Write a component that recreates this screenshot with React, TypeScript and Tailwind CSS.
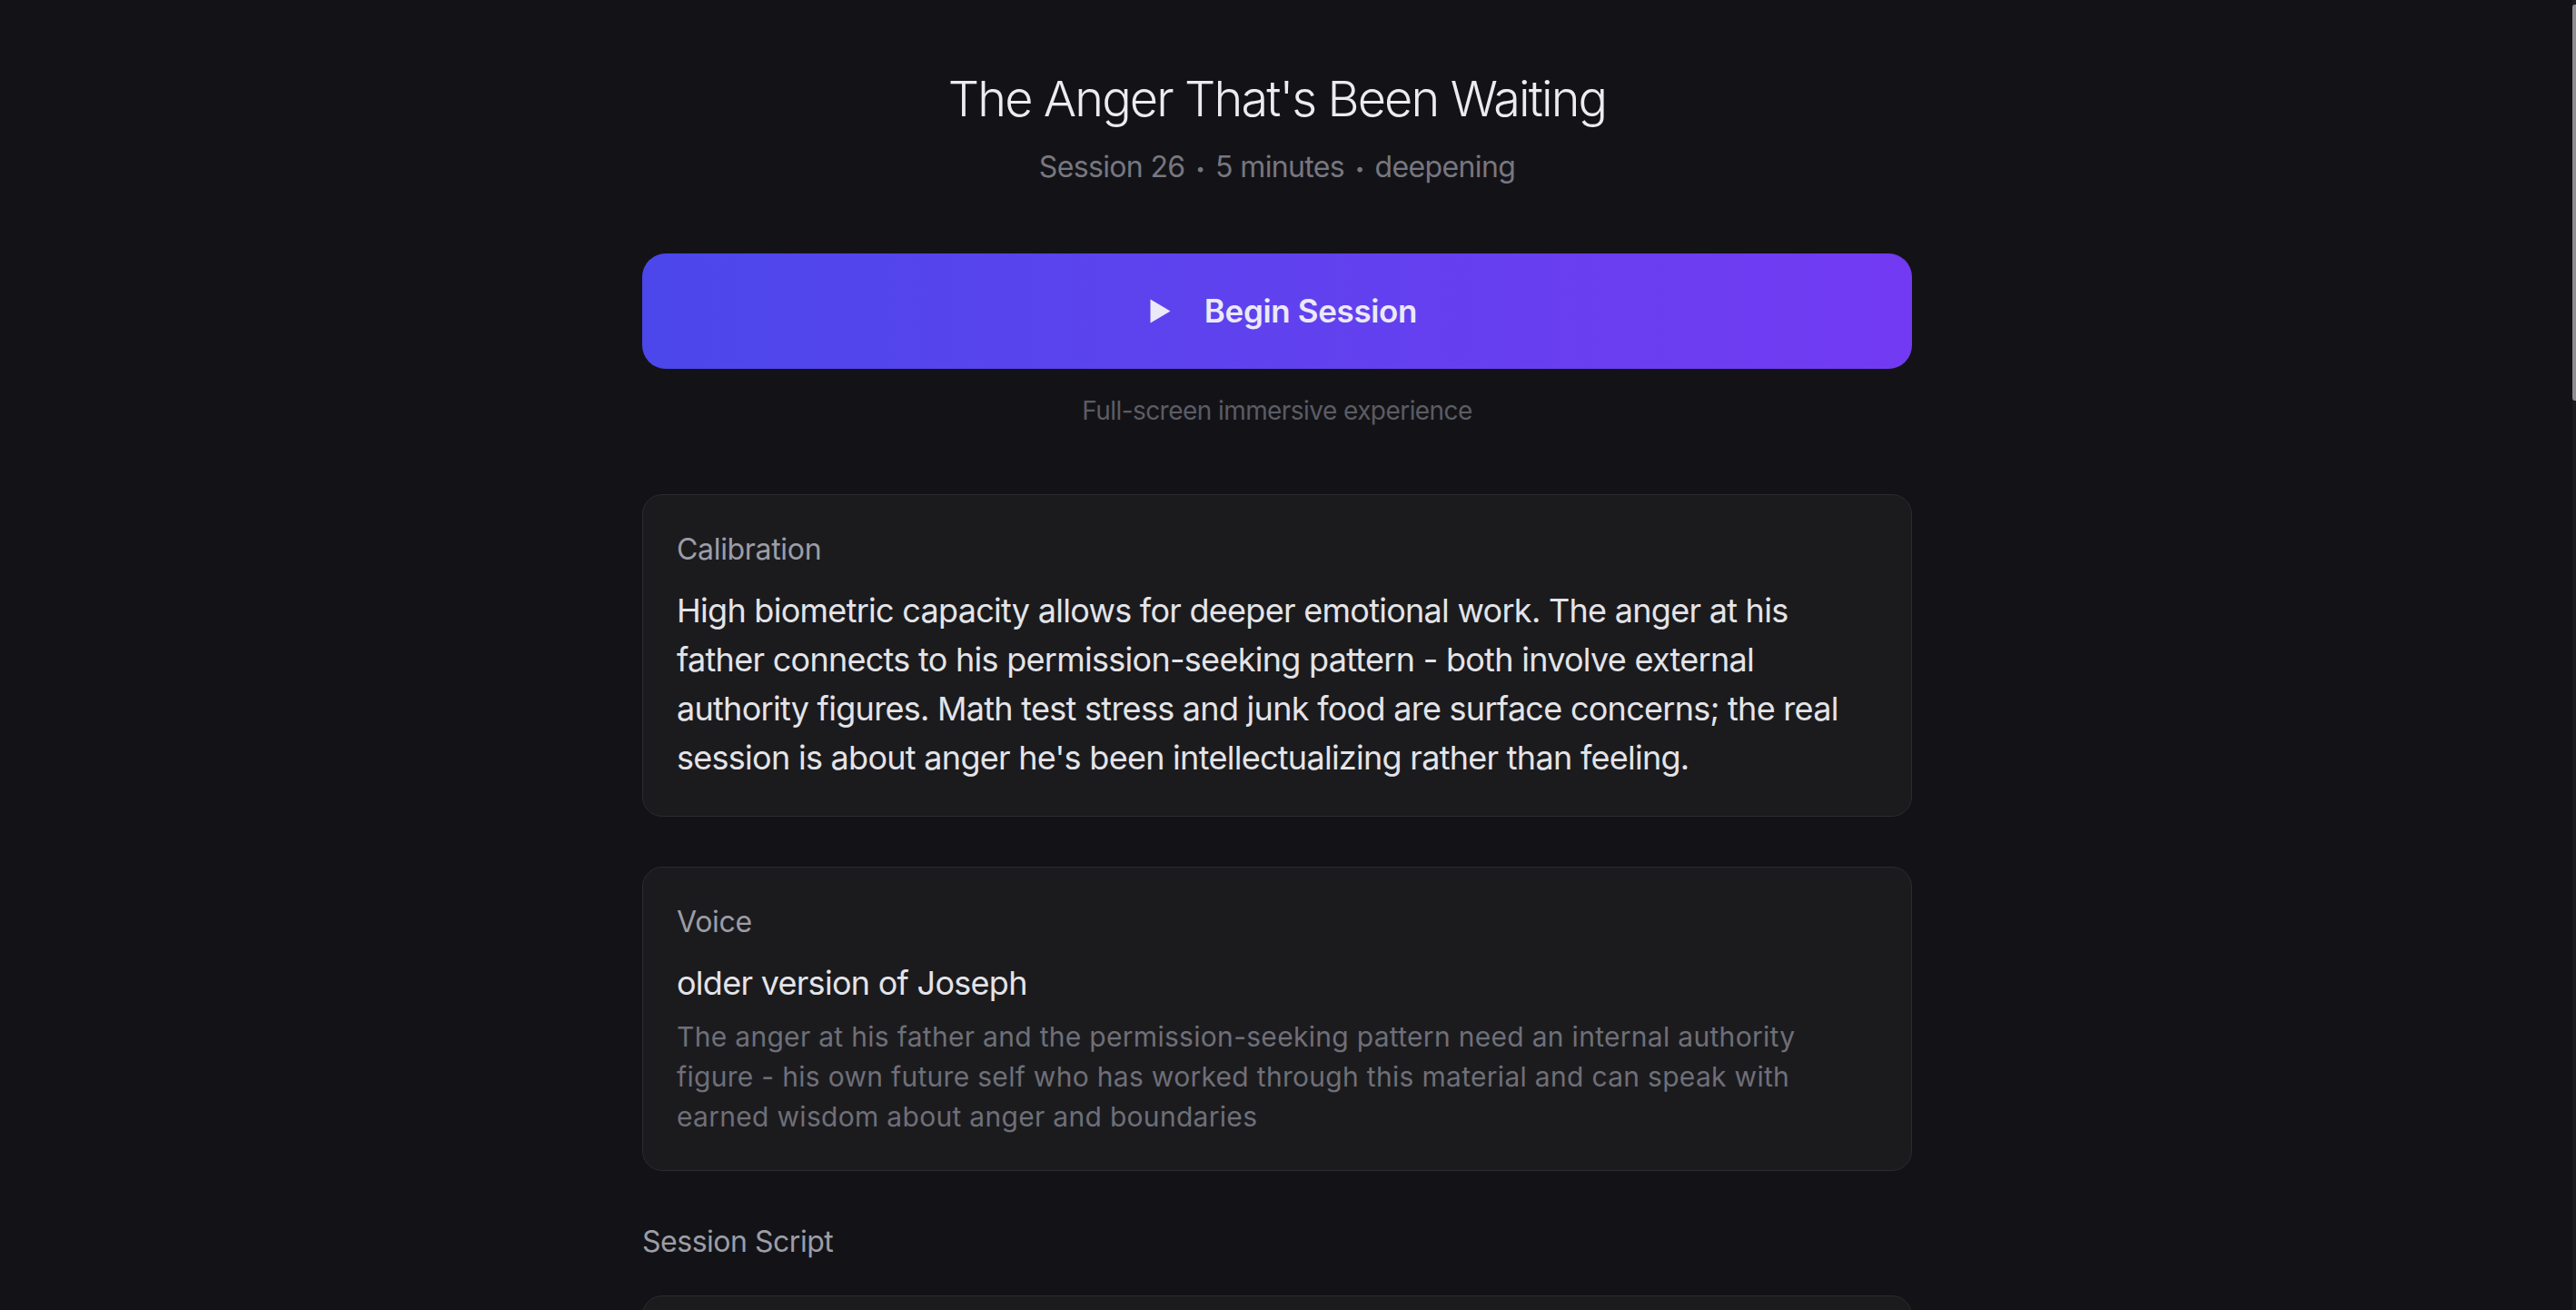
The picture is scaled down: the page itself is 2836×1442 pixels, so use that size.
import React from "react";

const font = { fontFamily: "Inter, 'Noto Sans', sans-serif" };

function PlayIcon() {
  return (
    <svg width="23" height="27" viewBox="0 0 23 27" className="flex-shrink-0">
      <path d="M0.5 0.5 L22.5 13.5 L0.5 26.5 Z" fill="currentColor" />
    </svg>
  );
}

function Card({ children }: { children: React.ReactNode }) {
  return (
    <div className="rounded-[22px] border border-[#2b2b30] bg-[#1b1b1e] px-[37px] pt-[36px] pb-[37px]">
      {children}
    </div>
  );
}

export default function App() {
  return (
    <div
      className="relative h-screen w-full overflow-hidden bg-[#131317] pr-[24px] antialiased"
      style={font}
    >
      <div className="mx-auto w-[1398px] pt-[77px]">
        <header className="text-center">
          <h1 className="text-[54px] font-light leading-[64px] tracking-[-0.035em] text-[#ececef]">
            The Anger That's Been Waiting
          </h1>
          <p className="mt-[19px] text-[32px] leading-[48px] tracking-[-0.02em] text-[#777780]">
            Session 26
            <span className="mx-[12px] align-[3px] text-[18px]">•</span>5 minutes
            <span className="mx-[12px] align-[3px] text-[18px]">•</span>deepening
          </p>
        </header>

        <button className="mt-[69px] flex h-[127px] w-full items-center justify-center gap-[37px] rounded-[26px] bg-linear-to-r from-[#4b47eb] to-[#723af2] pl-[14px] text-[#ebe9f7]">
          <PlayIcon />
          <span className="text-[35px] font-semibold tracking-[-0.01em]">Begin Session</span>
        </button>
        <p className="mt-[26px] text-center text-[28px] leading-[40px] tracking-[-0.02em] text-[#5c5c64]">
          Full-screen immersive experience
        </p>

        <div className="mt-[72px]">
          <Card>
            <div className="text-[32px] leading-[48px] tracking-[-0.01em] text-[#9d9da6]">
              Calibration
            </div>
            <p className="mt-[16px] text-[36px] leading-[54px] tracking-[-0.02em] text-[#e4e4e8]">
              High biometric capacity allows for deeper emotional work. The anger at his father
              connects to his permission-seeking pattern - both involve external authority figures.
              Math test stress and junk food are surface concerns; the real session is about anger
              he's been intellectualizing rather than feeling.
            </p>
          </Card>
        </div>

        <div className="mt-[55px]">
          <Card>
            <div className="text-[32px] leading-[48px] tracking-[-0.01em] text-[#9d9da6]">Voice</div>
            <div className="mt-[16px] text-[36px] leading-[54px] tracking-[-0.02em] text-[#e4e4e8]">
              older version of Joseph
            </div>
            <p className="mt-[10px] text-[30px] leading-[44px] tracking-[0.01em] text-[#6f6f78]">
              The anger at his father and the permission-seeking pattern need an internal authority
              figure - his own future self who has worked through this material and can speak with
              earned wisdom about anger and boundaries
            </p>
          </Card>
        </div>

        <h2 className="mt-[54px] text-[32px] leading-[48px] tracking-[-0.015em] text-[#9d9da6]">
          Session Script
        </h2>
        <div className="mt-[35px] h-[400px] rounded-[22px] border border-[#2b2b30] bg-[#1b1b1e]" />
      </div>

      {/* scrollbar */}
      <div className="absolute right-0 top-0 h-full w-[4px] bg-[#1c1c20]">
        <div className="mt-[5px] h-[436px] w-full rounded-l-[3px] bg-[#8d8d92]" />
      </div>
    </div>
  );
}
